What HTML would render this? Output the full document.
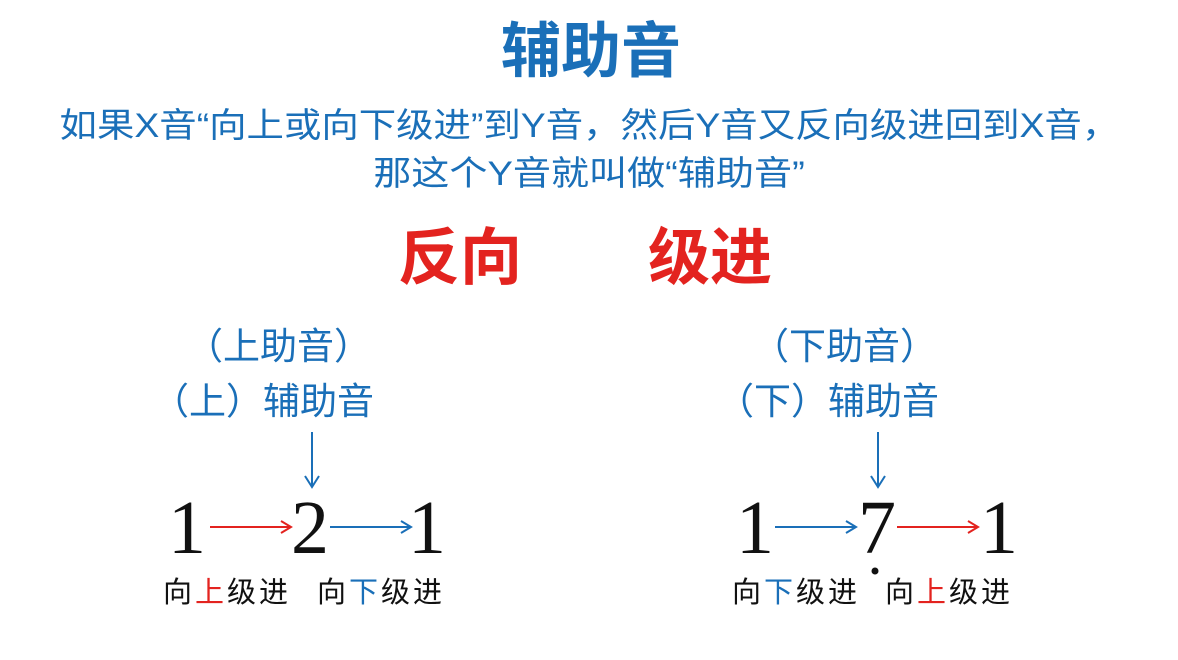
<!DOCTYPE html>
<html><head><meta charset="utf-8"><style>
body{margin:0;width:1178px;height:660px;background:#fff;position:relative;overflow:hidden;font-family:"Liberation Sans","Noto Sans CJK SC",sans-serif}
.a{position:absolute;white-space:nowrap;line-height:1}
.b{color:#1a6fb8}.r{color:#e3231f}
.num{font-family:"Liberation Serif",serif;font-size:76px;color:#111}
.lab{font-size:29px;color:#111;letter-spacing:3px}
</style></head><body>
<div class="a b" style="left:0;width:1178px;text-align:center;top:22px;font-size:60px;font-weight:bold;margin-left:2px">辅助音</div>
<div class="a b" style="left:0;width:1178px;top:109px;font-size:34px;text-align:center;transform:scaleX(1.1);transform-origin:585px 0">如果X音“向上或向下级进”到Y音，然后Y音又反向级进回到X音，</div>
<div class="a b" style="left:0;width:1178px;top:157px;font-size:34px;text-align:center;transform:scaleX(1.12);transform-origin:589px 0">那这个Y音就叫做“辅助音”</div>
<div class="a r" style="left:398px;top:228px;font-size:62px;font-weight:bold">反向</div>
<div class="a r" style="left:648px;top:228px;font-size:62px;font-weight:bold">级进</div>
<div class="a b" style="left:186px;top:328px;font-size:37px">（上助音）</div>
<div class="a b" style="left:152px;top:383px;font-size:37px">（上）辅助音</div>
<div class="a b" style="left:752px;top:328px;font-size:37px">（下助音）</div>
<div class="a b" style="left:717px;top:383px;font-size:37px">（下）辅助音</div>
<svg class="a" style="left:0;top:0" width="1178" height="660">
<g stroke="#1a6fb8" stroke-width="2" fill="none">
<path d="M312 432V486M305 476L312 487L319 476"/>
<path d="M878 432V486M871 476L878 487L885 476"/>
<path d="M330 527H410M401 521L411 527L401 533"/>
<path d="M775 527H855M846 521L856 527L846 533"/>
</g>
<g stroke="#e3231f" stroke-width="2" fill="none">
<path d="M210 527H290M281 521L291 527L281 533"/>
<path d="M897 527H977M968 521L978 527L968 533"/>
</g>
<circle cx="875" cy="571" r="3.5" fill="#111"/>
</svg>
<div class="a num" style="left:168px;top:490px">1</div>
<div class="a num" style="left:291px;top:490px">2</div>
<div class="a num" style="left:408px;top:490px">1</div>
<div class="a num" style="left:736px;top:490px">1</div>
<div class="a num" style="left:858px;top:490px">7</div>
<div class="a num" style="left:980px;top:490px">1</div>
<div class="a lab" style="left:163px;top:579px">向<span class="r">上</span>级进</div>
<div class="a lab" style="left:317px;top:579px">向<span class="b">下</span>级进</div>
<div class="a lab" style="left:732px;top:579px">向<span class="b">下</span>级进</div>
<div class="a lab" style="left:885px;top:579px">向<span class="r">上</span>级进</div>
</body></html>
